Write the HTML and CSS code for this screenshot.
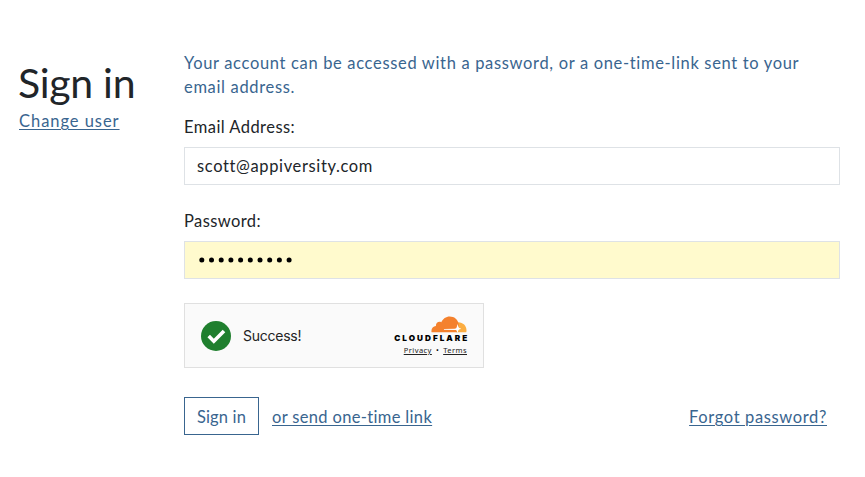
FILE: index.html
```html
<!DOCTYPE html>
<html lang="en">
<head>
<meta charset="utf-8">
<title>Sign in</title>
<link rel="stylesheet" href="styles.css">
</head>
<body>
<main class="page">
  <header class="side">
    <h1>Sign in</h1>
    <a class="change" href="#">Change user</a>
  </header>
  <form class="form">
    <p class="intro"><span class="line-one">Your account can be accessed with a password, or a one-time-link sent to your</span> <span class="line-two">email address.</span></p>
    <label class="email-label" for="email">Email Address:</label>
    <input class="field" id="email" type="text" value="scott@appiversity.com">
    <label class="password-label" for="password">Password:</label>
    <div class="field filled" id="password">
      <svg width="96" height="10" viewBox="0 0 96 10" aria-label="Password entered">
        <circle cx="4.8" cy="5" r="2.5"/><circle cx="14.5" cy="5" r="2.5"/><circle cx="24.2" cy="5" r="2.5"/><circle cx="33.9" cy="5" r="2.5"/><circle cx="43.6" cy="5" r="2.5"/><circle cx="53.3" cy="5" r="2.5"/><circle cx="63" cy="5" r="2.5"/><circle cx="72.7" cy="5" r="2.5"/><circle cx="82.4" cy="5" r="2.5"/><circle cx="92.1" cy="5" r="2.5"/>
      </svg>
    </div>
    <div class="captcha">
      <svg class="check" width="30" height="30" viewBox="0 0 30 30"><circle cx="15" cy="15" r="15" fill="#1f7f2e"/><path d="M7.7 15.1l5.1 5.1L23 10" fill="none" stroke="#fff" stroke-width="3.6"/></svg>
      <span class="success">Success!</span>
      <div class="brand">
        <svg class="cloud" width="36" height="17" viewBox="0 0 36 17">
          <path fill="#fbad41" d="M25 16.3V8.8l2.3-2.5c4.7.1 8.2 3.5 8.2 8.1 0 .8-.1 1.3-.3 1.9z"/>
          <path fill="#f4812d" d="M.6 16.3c-.8-3.3 1.3-6 4.3-6.2C4.6 6.9 7.7 4.7 10.3 6.2 11.8 2.6 15 .4 18.7.4c4.5 0 8.1 2.8 8.8 7.1.5 1.8.3 3.4-.6 4.5-.7.8-1.6 1.1-2.7 1.1l-11.3.2v.5l11.4.2c2.2.1 1.6 1.5 1.3 2.3z"/>
          <path fill="#fff" d="M13 12.9l10.5-.2c1.5-.1 2-.9 2.4-2.3l.7-2.3.8 2.6c.4 1 1.1 1.6 2.5 1.9v.5c-1.5.2-2.2.7-2.7 1.7l-.5 1.5h-.6l-.3-1.2c-.3-1-1-1.3-2.3-1.4L13 13.5z"/>
        </svg>
        <div class="wordmark">CLOUDFLARE</div>
        <div class="terms"><a href="#">Privacy</a><span>•</span><a href="#">Terms</a></div>
      </div>
    </div>
    <div class="actions">
      <button type="button">Sign in</button>
      <a class="send" href="#">or send one-time link</a>
      <a class="forgot" href="#">Forgot password?</a>
    </div>
  </form>
</main>
</body>
</html>
```
FILE: styles.css
```css
* { box-sizing: border-box; }
body {
  margin: 0;
  background: #fff;
  color: #212529;
  font: 16.5px/24px "Century Gothic", "URW Gothic", Lato, sans-serif;
  font-variant-ligatures: none;
}
a { color: #39658f; text-underline-offset: 2px; text-decoration-thickness: 1px; white-space: nowrap; }
.page {
  display: grid;
  grid-template-columns: 165px 656px;
  padding: 51px 0 0 19px;
}
.side { padding-top: 8px; }
h1 { margin: 0 0 2px -1px; font-size: 41px; line-height: 48px; font-weight: 400; letter-spacing: -0.3px; white-space: nowrap; }
.change { display: block; width: max-content; letter-spacing: 0.95px; }
.form { display: flex; flex-direction: column; }
.intro { margin: 0 0 16px; color: #39658f; letter-spacing: 0.665px; }
.line-one, .line-two { display: block; white-space: nowrap; }
label { align-self: flex-start; margin-bottom: 8px; }
.email-label { letter-spacing: 0.45px; }
.password-label { letter-spacing: 0.4px; }
.field {
  width: 100%;
  height: 38px;
  margin: 0 0 24px;
  padding: 0 12px;
  border: 1px solid #dee2e6;
  border-radius: 0;
  background: #fff;
  color: #212529;
  font: inherit;
  letter-spacing: 0.63px;
}
.filled { display: flex; align-items: center; background: #fffacd; }
.captcha {
  display: flex;
  align-items: center;
  width: 300px;
  height: 65px;
  padding: 0 16px;
  border: 1px solid #e0e0e0;
  background: #fafafa;
}
.success { margin-left: 12px; font: 14px/20px Inter, sans-serif; letter-spacing: -0.25px; color: #232323; }
.brand { display: flex; flex-direction: column; align-items: flex-end; margin-left: auto; color: #000; }
.cloud { display: block; }
.wordmark { font: 900 8.2px/9px Inter, sans-serif; letter-spacing: 2px; margin: 1px -2.3px 0 0; }
.terms { display: flex; gap: 4px; margin-top: 2px; font: 7.5px/10px "Noto Sans", sans-serif; letter-spacing: 0.45px; }
.terms a { color: #232323; text-underline-offset: 1px; }
.actions { display: flex; align-items: center; margin-top: 29px; }
button {
  width: 75px;
  height: 38px;
  padding: 2px 0 0;
  border: 1px solid #39658f;
  background: #fff;
  color: #39658f;
  font: inherit;
  letter-spacing: 0.15px;
}
.send { margin: 2px 0 0 13px; letter-spacing: 0.34px; }
.forgot { margin: 2px 13px 0 auto; letter-spacing: 0.63px; }
```
